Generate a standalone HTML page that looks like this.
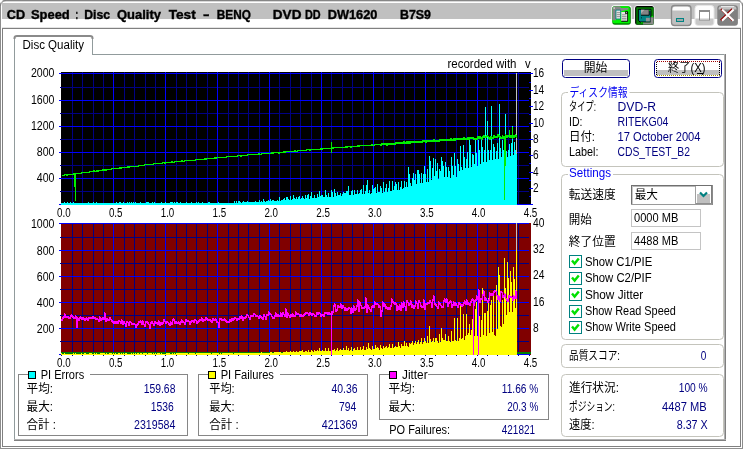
<!DOCTYPE html>
<html lang="ja"><head><meta charset="utf-8"><title>CD Speed : Disc Quality Test</title>
<style>html,body{margin:0;padding:0;background:#fff;overflow:hidden}svg{display:block;will-change:transform}text{font-family:"Liberation Sans","Noto Sans CJK JP","IPAGothic",sans-serif;font-size:12px;white-space:pre}</style></head><body>
<svg width="743" height="449" viewBox="0 0 743 449">
<rect x="0" y="0" width="743" height="449" fill="#fff"/>
<g shape-rendering="crispEdges">
<rect x="0" y="0" width="743" height="1" fill="#868686"/>
<rect x="0" y="1" width="743" height="1" fill="#d8d8d8"/>
<rect x="2" y="3" width="738" height="16" fill="#c0c0c0"/>
<rect x="0" y="0" width="1" height="449" fill="#8c8c8c"/>
<rect x="742" y="0" width="1" height="449" fill="#8c8c8c"/>
<rect x="0" y="448" width="743" height="1" fill="#909090"/>
<rect x="2" y="28" width="739" height="1" fill="#808080"/>
<rect x="2" y="446" width="739" height="1" fill="#808080"/>
<rect x="2" y="28" width="1" height="419" fill="#808080"/>
<rect x="740" y="28" width="1" height="419" fill="#808080"/>
<rect x="2" y="27" width="739" height="1" fill="#e4e4e4"/>
</g>
<path d="M0,5 V0 H5 A5,5 0 0 0 0,5Z" fill="#fff"/><path d="M0.5,6 A5.5,5.5 0 0 1 6,0.5" fill="none" stroke="#808080"/>
<path d="M743,5 V0 H738 A5,5 0 0 1 743,5Z" fill="#fff"/><path d="M742.5,6 A5.5,5.5 0 0 0 737,0.5" fill="none" stroke="#808080"/>
<text y="19.3" font-size="12.4" font-weight="bold" stroke="#000" stroke-width="0.35"><tspan x="6.8" textLength="18.4" lengthAdjust="spacingAndGlyphs">CD</tspan> <tspan x="31" textLength="38.7" lengthAdjust="spacingAndGlyphs">Speed</tspan> <tspan x="75.6" textLength="2.6" lengthAdjust="spacingAndGlyphs">:</tspan> <tspan x="84.2" textLength="25.8" lengthAdjust="spacingAndGlyphs">Disc</tspan> <tspan x="117" textLength="44" lengthAdjust="spacingAndGlyphs">Quality</tspan> <tspan x="168.7" textLength="27" lengthAdjust="spacingAndGlyphs">Test</tspan> <tspan x="203" textLength="6.5" lengthAdjust="spacingAndGlyphs">-</tspan> <tspan x="216.8" textLength="34" lengthAdjust="spacingAndGlyphs">BENQ</tspan> <tspan x="272.8" textLength="28.7" lengthAdjust="spacingAndGlyphs">DVD</tspan> <tspan x="305" textLength="15.7" lengthAdjust="spacingAndGlyphs">DD</tspan> <tspan x="327.7" textLength="49.7" lengthAdjust="spacingAndGlyphs">DW1620</tspan> <tspan x="400" textLength="31" lengthAdjust="spacingAndGlyphs">B7S9</tspan></text>
<g>
<rect x="611.3" y="5.2" width="20.4" height="20.3" rx="3.2" fill="#fdfdfd"/>
<rect x="612.3" y="6.2" width="18.5" height="18.5" rx="2.6" fill="#008400"/>
<path d="M612.3,9 Q612.3,6.2 615,6.2 H627.5 Q629.7,6.2 629.7,8.5 V23.2 H614.5 Q612.3,23.2 612.3,21Z" fill="#00f400"/>
<path d="M612.3,9 Q612.3,6.2 615,6.2 H620 L621,7.9 H628.3 V9.6 L622,11 L617,14 L615.8,20.3 L612.3,20.3Z" fill="#868686"/>
<rect x="613.4" y="7.3" width="1.6" height="1.6" fill="#c8c8c8"/>
<path d="M615.9,10.1 H620.6 V19 H615.9Z" fill="#e4e4e4" stroke="#008484" stroke-width="0.9"/>
<path d="M616.6,12.6h3.6M616.6,14.6h3.6M616.6,16.6h3.6" stroke="#8c8c8c" stroke-width="0.9"/>
<path d="M621.3,12 H625.6 L627.5,13.9 V21 H621.3Z" fill="#e6e6e6"/>
<path d="M625.3,11.8 H627.7 V21.3 H621.3" fill="none" stroke="#101010" stroke-width="1"/>
<path d="M625.2,11.6 h2.6 v2.4 h-2.6z" fill="#101010"/><rect x="626.1" y="12.3" width="0.9" height="0.9" fill="#fff"/>
<path d="M621.9,14.8h4.6M621.9,16.6h4.6M621.9,18.4h4.6M621.9,20.1h4.6" stroke="#8c8c8c" stroke-width="0.9"/>
</g>
<g>
<rect x="634.2" y="5.2" width="20.2" height="20.3" rx="3" fill="#fdfdfd"/>
<rect x="635.1" y="6.1" width="18.6" height="18.7" rx="2" fill="#000"/>
<rect x="636.3" y="7.3" width="17.2" height="17.2" fill="#008400"/>
<path d="M638.3,9.3 H650.9 V22 H640 L638.3,20.4Z" fill="#008484" stroke="#000" stroke-width="1"/>
<path d="M641,9.8 H649 V15 H641Z" fill="#848484"/><path d="M641,13.2 L644.6,9.8 H641Z" fill="#b0b0b0"/>
<path d="M641,15.2 H649.2 V9.8" fill="none" stroke="#000" stroke-width="0.9"/>
<rect x="645.9" y="17.8" width="3.9" height="3.6" fill="#8c9494"/><rect x="641" y="17.2" width="1" height="1.2" fill="#003838"/>
<rect x="651.5" y="15.9" width="1.6" height="1.2" fill="#00f000"/><rect x="649.2" y="9.8" width="1.2" height="1.2" fill="#00c000"/>
<path d="M650.6,17.3 H653.5 V24.4 H643 V22.6 H650.6Z" fill="#8c8c8c"/>
<path d="M641,22 L644.5,23.3 L641.4,23.3Z" fill="#00f000"/>
</g>
<rect x="671.5" y="5.5" width="19.5" height="20" rx="3" fill="#c0c0c0" stroke="#8a8a8a" stroke-width="1.3"/>
<path d="M672.5,10.5 V9 Q672.5,6.7 675,6.7 H687.5 Q690,6.7 690,9 V10.5Z" fill="#fbfbfb"/>
<rect x="676" y="18" width="7" height="3" fill="#a0a8a8" stroke="#008484" stroke-width="1" shape-rendering="crispEdges"/>
<rect x="695" y="5.5" width="19" height="20" rx="3" fill="#fdfdfd" stroke="#e6e6e6"/>
<path d="M695.5,18.5 H713.5 V22.5 Q713.5,25 711,25 H698 Q695.5,25 695.5,22.5Z" fill="#c8c8c8"/>
<rect x="699.5" y="10.5" width="10" height="9.5" fill="#fff" stroke="#8c8c8c"/><rect x="699" y="10" width="11" height="2" fill="#8c8c8c"/><rect x="700" y="18.5" width="9" height="1" fill="#c8c8c8"/>
<rect x="717.3" y="5.3" width="20.6" height="20.4" rx="3" fill="#808080"/>
<path d="M718.6,9.6 V8.6 Q718.6,6.2 721,6.2 H734 Q736.4,6.2 736.4,8.6 V9.6Z" fill="#c0c0c0"/>
<path d="M721,6.6 H734.2" stroke="#f4f4f4" stroke-width="0.9"/>
<path d="M721.6,9.3 L733.2,20.7 M733.0,9.3 L721.4,20.7" stroke="#900000" stroke-width="2.2" transform="translate(-0.55,-0.35)"/>
<path d="M722,9.5 L733.6,20.7 M733.6,9.5 L722,20.7" stroke="#fff" stroke-width="2.1"/>
<g shape-rendering="crispEdges">
<rect x="92" y="54" width="634" height="1" fill="#919b9c"/>
<rect x="14" y="38" width="1" height="403" fill="#919b9c"/>
<rect x="724" y="54" width="1" height="387" fill="#b0b0b0"/>
<rect x="725" y="54" width="1" height="387" fill="#808080"/>
<rect x="14" y="439" width="712" height="1" fill="#b0b0b0"/>
<rect x="14" y="440" width="712" height="1" fill="#808080"/>
<rect x="92" y="38" width="1" height="17" fill="#919b9c"/>
</g>
<path d="M14.5,39 V38 Q14.5,36 17,36 H90 Q92.5,36 92.5,38 V39" fill="none" stroke="#8a8a8a" stroke-width="2"/>
<text x="22.5" y="48.8" textLength="61.5" lengthAdjust="spacingAndGlyphs">Disc Quality</text>
<g shape-rendering="crispEdges">
<rect x="61" y="72" width="470" height="133" fill="#000"/>
<rect x="61" y="87" width="468" height="1" fill="#000084"/>
<rect x="61" y="113" width="468" height="1" fill="#000084"/>
<rect x="61" y="139" width="468" height="1" fill="#000084"/>
<rect x="61" y="165" width="468" height="1" fill="#000084"/>
<rect x="61" y="191" width="468" height="1" fill="#000084"/>
<rect x="72" y="72" width="1" height="132" fill="#000084"/>
<rect x="82" y="72" width="1" height="132" fill="#000084"/>
<rect x="93" y="72" width="1" height="132" fill="#000084"/>
<rect x="103" y="72" width="1" height="132" fill="#000084"/>
<rect x="124" y="72" width="1" height="132" fill="#000084"/>
<rect x="134" y="72" width="1" height="132" fill="#000084"/>
<rect x="145" y="72" width="1" height="132" fill="#000084"/>
<rect x="155" y="72" width="1" height="132" fill="#000084"/>
<rect x="176" y="72" width="1" height="132" fill="#000084"/>
<rect x="186" y="72" width="1" height="132" fill="#000084"/>
<rect x="196" y="72" width="1" height="132" fill="#000084"/>
<rect x="207" y="72" width="1" height="132" fill="#000084"/>
<rect x="228" y="72" width="1" height="132" fill="#000084"/>
<rect x="238" y="72" width="1" height="132" fill="#000084"/>
<rect x="248" y="72" width="1" height="132" fill="#000084"/>
<rect x="259" y="72" width="1" height="132" fill="#000084"/>
<rect x="279" y="72" width="1" height="132" fill="#000084"/>
<rect x="290" y="72" width="1" height="132" fill="#000084"/>
<rect x="300" y="72" width="1" height="132" fill="#000084"/>
<rect x="311" y="72" width="1" height="132" fill="#000084"/>
<rect x="331" y="72" width="1" height="132" fill="#000084"/>
<rect x="342" y="72" width="1" height="132" fill="#000084"/>
<rect x="352" y="72" width="1" height="132" fill="#000084"/>
<rect x="363" y="72" width="1" height="132" fill="#000084"/>
<rect x="383" y="72" width="1" height="132" fill="#000084"/>
<rect x="394" y="72" width="1" height="132" fill="#000084"/>
<rect x="404" y="72" width="1" height="132" fill="#000084"/>
<rect x="414" y="72" width="1" height="132" fill="#000084"/>
<rect x="435" y="72" width="1" height="132" fill="#000084"/>
<rect x="446" y="72" width="1" height="132" fill="#000084"/>
<rect x="456" y="72" width="1" height="132" fill="#000084"/>
<rect x="466" y="72" width="1" height="132" fill="#000084"/>
<rect x="487" y="72" width="1" height="132" fill="#000084"/>
<rect x="497" y="72" width="1" height="132" fill="#000084"/>
<rect x="508" y="72" width="1" height="132" fill="#000084"/>
<rect x="518" y="72" width="1" height="132" fill="#000084"/>
<rect x="61" y="73" width="468" height="1" fill="#0000ff"/>
<rect x="61" y="100" width="468" height="1" fill="#0000ff"/>
<rect x="61" y="126" width="468" height="1" fill="#0000ff"/>
<rect x="61" y="152" width="468" height="1" fill="#0000ff"/>
<rect x="61" y="178" width="468" height="1" fill="#0000ff"/>
<rect x="61" y="204" width="468" height="1" fill="#0000ff"/>
<rect x="113" y="72" width="1" height="132" fill="#0000ff"/>
<rect x="165" y="72" width="1" height="132" fill="#0000ff"/>
<rect x="217" y="72" width="1" height="132" fill="#0000ff"/>
<rect x="269" y="72" width="1" height="132" fill="#0000ff"/>
<rect x="321" y="72" width="1" height="132" fill="#0000ff"/>
<rect x="373" y="72" width="1" height="132" fill="#0000ff"/>
<rect x="425" y="72" width="1" height="132" fill="#0000ff"/>
<rect x="477" y="72" width="1" height="132" fill="#0000ff"/>
</g>
<g shape-rendering="crispEdges">
<rect x="516" y="73" width="1" height="131" fill="#c0c0c0"/>
<path d="M61,205V203h3V202h1V203h2V202h1V203h2V202h1V203h2V202h1V203h14V202h1V203h4V202h1V203h2V202h1V203h19V202h1V203h2V202h2V203h2V202h1V203h3V202h1V203h1V202h1V203h1V202h1V203h1V202h1V203h1V202h1V203h4V202h1V203h5V202h3V203h3V202h1V203h1V202h1V203h6V202h1V203h3V202h1V203h4V202h3V203h1V202h1V203h1V202h2V203h2V202h1V203h5V202h1V203h4V202h1V203h4V202h1V203h1V202h1V203h3V202h1V203h5V202h2V203h8V202h1V203h15V201h1V203h1V201h1V203h1V201h2V202h1V203h1V202h1V201h1V202h3V201h1V202h7V201h1V202h3V200h1V202h1V201h1V202h1V199h1V201h1V202h1V201h2V200h1V201h1V199h1V201h1V200h2V201h3V200h1V201h1V197h1V201h1V200h2V199h1V198h1V200h1V197h2V199h1V200h1V196h1V200h1V199h1V195h1V198h1V199h1V197h1V199h1V197h1V196h1V199h1V198h1V196h1V198h1V199h1V195h1V198h1V195h1V194h1V199h1V196h1V192h1V198h2V195h1V198h2V194h1V197h1V191h1V196h1V195h2V197h2V190h1V195h1V197h1V193h1V197h2V190h1V192h1V197h1V189h1V193h1V196h1V192h1V195h2V193h1V196h1V194h1V192h1V193h2V191h2V186h1V195h2V191h1V190h1V195h1V190h1V194h2V190h1V194h1V193h1V190h1V189h1V194h1V185h1V194h1V191h1V185h1V180h1V193h1V190h1V194h1V193h1V185h1V189h1V188h1V187h1V193h1V184h1V192h2V186h1V188h1V193h1V182h1V192h1V188h1V184h1V192h1V188h1V181h1V191h2V181h1V190h1V186h1V182h1V184h1V190h1V182h1V190h1V187h1V181h1V189h1V188h1V181h1V187h1V182h1V187h1V167h1V174h1V183h1V186h1V178h1V173h1V180h1V174h1V184h1V170h2V174h1V183h1V173h1V183h1V174h1V166h1V174h1V182h1V169h1V182h1V156h1V161h1V180h1V168h1V158h1V176h1V159h1V171h1V163h1V179h1V169h1V171h1V157h1V161h1V166h1V177h1V162h1V167h1V177h1V167h1V171h1V178h1V157h1V166h1V175h1V153h1V166h1V177h1V159h1V164h1V171h1V146h1V167h1V170h1V145h1V157h1V168h1V159h1V152h1V168h1V140h1V145h1V167h1V154h1V155h1V164h1V140h1V153h1V166h1V140h1V150h1V164h1V139h1V147h1V162h1V150h1V107h1V162h1V121h1V150h1V160h1V150h1V106h1V160h1V144h1V147h1V159h1V151h1V143h1V159h1V104h1V148h1V157h1V140h1V150h1V158h1V114h1V151h1V157h1V150h1V144h1V156h1V143h1V126h1V155h1V142h1V150h1V154h1V205Z" fill="#00ffff"/>
</g>
<path d="M62,175v1h1v-1zM63,175v1h1v-1zM64,174v2h1v-2zM65,174v1h1v-1zM66,174v2h1v-2zM67,174v2h1v-2zM68,174v1h1v-1zM69,174v1h1v-1zM70,174v1h1v-1zM71,174v1h1v-1zM72,174v1h1v-1zM73,173v2h1v-2zM74,173v1h1v-1zM75,173v1h1v-1zM76,173v1h1v-1zM77,173v1h1v-1zM78,173v1h1v-1zM79,173v1h1v-1zM80,173v1h1v-1zM81,172v2h1v-2zM82,172v1h1v-1zM83,172v1h1v-1zM84,172v1h1v-1zM85,172v1h1v-1zM86,172v1h1v-1zM87,172v1h1v-1zM88,172v1h1v-1zM89,171v2h1v-2zM90,171v1h1v-1zM91,171v1h1v-1zM92,171v1h1v-1zM93,170v2h1v-2zM94,170v2h1v-2zM95,171v1h1v-1zM96,170v2h1v-2zM97,170v2h1v-2zM98,170v2h1v-2zM99,170v1h1v-1zM100,170v1h1v-1zM101,170v1h1v-1zM102,169v2h1v-2zM103,169v2h1v-2zM104,169v2h1v-2zM105,169v2h1v-2zM106,169v2h1v-2zM107,169v1h1v-1zM108,169v1h1v-1zM109,169v1h1v-1zM110,169v1h1v-1zM111,168v2h1v-2zM112,168v1h1v-1zM113,168v1h1v-1zM114,168v1h1v-1zM115,168v1h1v-1zM116,168v1h1v-1zM117,168v1h1v-1zM118,168v1h1v-1zM119,167v2h1v-2zM120,167v2h1v-2zM121,167v2h1v-2zM122,167v1h1v-1zM123,167v1h1v-1zM124,167v1h1v-1zM125,167v1h1v-1zM126,167v1h1v-1zM127,166v2h1v-2zM128,166v2h1v-2zM129,166v2h1v-2zM130,166v1h1v-1zM131,166v1h1v-1zM132,166v1h1v-1zM133,166v1h1v-1zM134,166v1h1v-1zM135,166v1h1v-1zM136,166v1h1v-1zM137,166v1h1v-1zM138,165v2h1v-2zM139,165v1h1v-1zM140,165v1h1v-1zM141,165v1h1v-1zM142,165v1h1v-1zM143,165v1h1v-1zM144,164v2h1v-2zM145,164v1h1v-1zM146,164v1h1v-1zM147,164v1h1v-1zM148,164v1h1v-1zM149,164v1h1v-1zM150,164v1h1v-1zM151,164v1h1v-1zM152,164v1h1v-1zM153,163v2h1v-2zM154,163v1h1v-1zM155,163v1h1v-1zM156,163v1h1v-1zM157,163v1h1v-1zM158,163v1h1v-1zM159,163v1h1v-1zM160,163v1h1v-1zM161,163v1h1v-1zM162,162v2h1v-2zM163,162v1h1v-1zM164,162v2h1v-2zM165,162v2h1v-2zM166,162v1h1v-1zM167,162v1h1v-1zM168,162v1h1v-1zM169,162v1h1v-1zM170,162v1h1v-1zM171,161v2h1v-2zM172,161v2h1v-2zM173,162v1h1v-1zM174,161v2h1v-2zM175,161v1h1v-1zM176,161v1h1v-1zM177,161v1h1v-1zM178,161v1h1v-1zM179,161v1h1v-1zM180,161v1h1v-1zM181,160v2h1v-2zM182,160v2h1v-2zM183,161v1h1v-1zM184,160v2h1v-2zM185,160v1h1v-1zM186,160v1h1v-1zM187,160v1h1v-1zM188,160v1h1v-1zM189,160v1h1v-1zM190,160v1h1v-1zM191,160v1h1v-1zM192,160v1h1v-1zM193,160v1h1v-1zM194,160v1h1v-1zM195,159v2h1v-2zM196,159v1h1v-1zM197,159v1h1v-1zM198,159v1h1v-1zM199,159v1h1v-1zM200,159v1h1v-1zM201,159v1h1v-1zM202,159v1h1v-1zM203,159v1h1v-1zM204,158v2h1v-2zM205,158v2h1v-2zM206,158v2h1v-2zM207,158v1h1v-1zM208,158v1h1v-1zM209,158v1h1v-1zM210,158v1h1v-1zM211,158v1h1v-1zM212,158v1h1v-1zM213,158v1h1v-1zM214,157v2h1v-2zM215,157v2h1v-2zM216,157v2h1v-2zM217,157v1h1v-1zM218,157v1h1v-1zM219,157v1h1v-1zM220,157v1h1v-1zM221,157v1h1v-1zM222,157v1h1v-1zM223,157v1h1v-1zM224,157v1h1v-1zM225,157v1h1v-1zM226,156v2h1v-2zM227,156v1h1v-1zM228,156v1h1v-1zM229,156v1h1v-1zM230,156v1h1v-1zM231,156v1h1v-1zM232,156v1h1v-1zM233,156v1h1v-1zM234,156v1h1v-1zM235,156v1h1v-1zM236,156v1h1v-1zM237,155v2h1v-2zM238,155v1h1v-1zM239,155v1h1v-1zM240,155v2h1v-2zM241,155v2h1v-2zM242,155v1h1v-1zM243,155v1h1v-1zM244,155v1h1v-1zM245,155v1h1v-1zM246,155v1h1v-1zM247,154v2h1v-2zM248,154v1h1v-1zM249,154v1h1v-1zM250,154v1h1v-1zM251,154v1h1v-1zM252,154v1h1v-1zM253,154v1h1v-1zM254,154v1h1v-1zM255,154v1h1v-1zM256,154v1h1v-1zM257,154v1h1v-1zM258,153v2h1v-2zM259,153v2h1v-2zM260,154v1h1v-1zM261,153v2h1v-2zM262,153v1h1v-1zM263,153v1h1v-1zM264,153v1h1v-1zM265,153v1h1v-1zM266,153v1h1v-1zM267,153v1h1v-1zM268,153v1h1v-1zM269,153v1h1v-1zM270,153v1h1v-1zM271,152v2h1v-2zM272,152v2h1v-2zM273,152v2h1v-2zM274,152v1h1v-1zM275,152v1h1v-1zM276,152v1h1v-1zM277,152v1h1v-1zM278,152v2h1v-2zM279,152v2h1v-2zM280,152v1h1v-1zM281,152v1h1v-1zM282,152v1h1v-1zM283,151v2h1v-2zM284,151v2h1v-2zM285,151v2h1v-2zM286,151v1h1v-1zM287,151v1h1v-1zM288,151v1h1v-1zM289,151v1h1v-1zM290,151v1h1v-1zM291,151v1h1v-1zM292,151v1h1v-1zM293,151v1h1v-1zM294,150v2h1v-2zM295,150v2h1v-2zM296,151v1h1v-1zM297,150v2h1v-2zM298,150v1h1v-1zM299,150v1h1v-1zM300,150v1h1v-1zM301,150v1h1v-1zM302,150v1h1v-1zM303,150v1h1v-1zM304,150v1h1v-1zM305,150v1h1v-1zM306,149v2h1v-2zM307,149v1h1v-1zM308,149v1h1v-1zM309,149v2h1v-2zM310,149v2h1v-2zM311,149v1h1v-1zM312,149v1h1v-1zM313,149v1h1v-1zM314,149v1h1v-1zM315,149v1h1v-1zM316,149v1h1v-1zM317,149v1h1v-1zM318,149v1h1v-1zM319,149v1h1v-1zM320,148v2h1v-2zM321,148v2h1v-2zM322,148v2h1v-2zM323,148v1h1v-1zM324,148v1h1v-1zM325,148v1h1v-1zM326,148v1h1v-1zM327,148v1h1v-1zM328,148v1h1v-1zM329,148v1h1v-1zM330,148v1h1v-1zM331,147v2h1v-2zM332,147v2h1v-2zM333,147v2h1v-2zM334,147v1h1v-1zM335,147v1h1v-1zM336,147v1h1v-1zM337,147v1h1v-1zM338,147v1h1v-1zM339,147v1h1v-1zM340,147v1h1v-1zM341,147v1h1v-1zM342,147v1h1v-1zM343,147v1h1v-1zM344,147v1h1v-1zM345,146v2h1v-2zM346,146v2h1v-2zM347,146v2h1v-2zM348,146v1h1v-1zM349,146v1h1v-1zM350,146v2h1v-2zM351,146v2h1v-2zM352,146v1h1v-1zM353,146v1h1v-1zM354,146v1h1v-1zM355,146v1h1v-1zM356,146v1h1v-1zM357,145v2h1v-2zM358,145v2h1v-2zM359,145v2h1v-2zM360,145v1h1v-1zM361,145v1h1v-1zM362,145v1h1v-1zM363,145v1h1v-1zM364,145v1h1v-1zM365,145v1h1v-1zM366,145v1h1v-1zM367,145v1h1v-1zM368,145v1h1v-1zM369,145v1h1v-1zM370,145v1h1v-1zM371,144v2h1v-2zM372,144v2h1v-2zM373,145v1h1v-1zM374,144v2h1v-2zM375,144v1h1v-1zM376,144v1h1v-1zM377,144v1h1v-1zM378,144v1h1v-1zM379,144v1h1v-1zM380,144v1h1v-1z" fill="#00f000" shape-rendering="crispEdges"/>
<path d="M380,144v2h1v-2zM381,143v3h1v-3zM382,143v2h1v-2zM383,143v2h1v-2zM384,143v2h1v-2zM385,143v2h1v-2zM386,143v3h1v-3zM387,143v3h1v-3zM388,143v2h1v-2zM389,143v2h1v-2zM390,143v2h1v-2zM391,143v2h1v-2zM392,143v2h1v-2zM393,143v2h1v-2zM394,143v2h1v-2zM395,142v3h1v-3zM396,142v2h1v-2zM397,142v2h1v-2zM398,142v2h1v-2zM399,142v2h1v-2zM400,142v2h1v-2zM401,142v2h1v-2zM402,142v2h1v-2zM403,141v3h1v-3zM404,141v3h1v-3zM405,142v2h1v-2zM406,141v3h1v-3zM407,141v3h1v-3zM408,141v3h1v-3zM409,141v3h1v-3zM410,141v3h1v-3zM411,141v2h1v-2zM412,141v2h1v-2zM413,141v2h1v-2zM414,141v2h1v-2zM415,141v2h1v-2zM416,141v2h1v-2zM417,141v2h1v-2zM418,141v2h1v-2zM419,141v2h1v-2zM420,141v2h1v-2zM421,141v2h1v-2zM422,140v3h1v-3zM423,140v2h1v-2zM424,140v2h1v-2zM425,140v3h1v-3zM426,140v3h1v-3zM427,140v2h1v-2zM428,140v2h1v-2zM429,140v2h1v-2zM430,140v2h1v-2zM431,140v2h1v-2zM432,140v2h1v-2zM433,139v3h1v-3zM434,139v3h1v-3zM435,140v2h1v-2zM436,140v2h1v-2zM437,140v2h1v-2zM438,140v2h1v-2zM439,139v3h1v-3zM440,139v2h1v-2zM441,139v2h1v-2zM442,139v2h1v-2zM443,139v2h1v-2zM444,139v2h1v-2zM445,139v2h1v-2zM446,139v2h1v-2zM447,139v2h1v-2zM448,139v2h1v-2zM449,139v2h1v-2zM450,138v3h1v-3zM451,138v3h1v-3zM452,139v2h1v-2zM453,138v3h1v-3zM454,138v3h1v-3zM455,138v3h1v-3zM456,138v2h1v-2zM457,138v2h1v-2zM458,138v2h1v-2zM459,138v2h1v-2zM460,138v2h1v-2zM461,138v2h1v-2zM462,138v2h1v-2zM463,137v3h1v-3zM464,137v3h1v-3zM465,138v2h1v-2zM466,138v2h1v-2zM467,137v3h1v-3zM468,137v3h1v-3zM469,137v3h1v-3zM470,137v2h1v-2zM471,137v2h1v-2zM472,137v2h1v-2zM473,137v3h1v-3zM474,138v2h1v-2zM475,138v2h1v-2zM476,138v2h1v-2zM477,136v4h1v-4zM478,136v3h1v-3zM479,136v3h1v-3zM480,136v3h1v-3zM481,137v3h1v-3zM482,136v4h1v-4zM483,135v3h1v-3zM484,135v3h1v-3zM485,136v2h1v-2zM486,135v3h1v-3zM487,135v2h1v-2zM488,136v3h1v-3zM489,137v3h1v-3zM490,136v4h1v-4zM491,136v3h1v-3zM492,137v2h1v-2zM493,135v4h1v-4zM494,135v3h1v-3zM495,136v2h1v-2zM496,136v2h1v-2zM497,134v4h1v-4zM498,134v3h1v-3zM499,135v3h1v-3zM500,136v3h1v-3zM501,137v2h1v-2zM502,135v4h1v-4zM503,136v3h1v-3zM504,136v3h1v-3zM505,134v4h1v-4zM506,135v3h1v-3zM507,135v3h1v-3zM508,135v2h1v-2zM509,135v2h1v-2zM510,135v3h1v-3zM511,135v3h1v-3zM512,134v3h1v-3zM513,135v3h1v-3zM514,135v3h1v-3zM515,134v3h1v-3zM516,135v3h1v-3z" fill="#00f000" shape-rendering="crispEdges"/>
<g shape-rendering="crispEdges">
<rect x="74" y="174" width="2" height="13" fill="#00f000"/>
<rect x="75" y="187" width="1" height="14" fill="#00f000"/>
<rect x="331" y="142" width="1" height="11" fill="#00f000"/>
<rect x="504" y="136" width="2" height="30" fill="#00f000"/>
<rect x="504" y="166" width="1" height="34" fill="#00f000"/>
<rect x="512" y="127" width="1" height="12" fill="#00f000"/>
<rect x="509" y="130" width="1" height="8" fill="#00f000"/>
</g>
<g shape-rendering="crispEdges">
<rect x="59" y="73" width="2" height="1" fill="#0000ff"/>
<rect x="60" y="87" width="1" height="1" fill="#000084"/>
<rect x="59" y="100" width="2" height="1" fill="#0000ff"/>
<rect x="60" y="113" width="1" height="1" fill="#000084"/>
<rect x="59" y="126" width="2" height="1" fill="#0000ff"/>
<rect x="60" y="139" width="1" height="1" fill="#000084"/>
<rect x="59" y="152" width="2" height="1" fill="#0000ff"/>
<rect x="60" y="165" width="1" height="1" fill="#000084"/>
<rect x="59" y="178" width="2" height="1" fill="#0000ff"/>
<rect x="60" y="191" width="1" height="1" fill="#000084"/>
<rect x="59" y="204" width="2" height="1" fill="#0000ff"/>
<rect x="529" y="73" width="4" height="1" fill="#0000ff"/>
<rect x="529" y="82" width="2" height="1" fill="#0000ff"/>
<rect x="529" y="90" width="4" height="1" fill="#0000ff"/>
<rect x="529" y="98" width="2" height="1" fill="#0000ff"/>
<rect x="529" y="106" width="4" height="1" fill="#0000ff"/>
<rect x="529" y="114" width="2" height="1" fill="#0000ff"/>
<rect x="529" y="123" width="4" height="1" fill="#0000ff"/>
<rect x="529" y="131" width="2" height="1" fill="#0000ff"/>
<rect x="529" y="139" width="4" height="1" fill="#0000ff"/>
<rect x="529" y="147" width="2" height="1" fill="#0000ff"/>
<rect x="529" y="155" width="4" height="1" fill="#0000ff"/>
<rect x="529" y="163" width="2" height="1" fill="#0000ff"/>
<rect x="529" y="172" width="4" height="1" fill="#0000ff"/>
<rect x="529" y="180" width="2" height="1" fill="#0000ff"/>
<rect x="529" y="188" width="4" height="1" fill="#0000ff"/>
<rect x="529" y="196" width="2" height="1" fill="#0000ff"/>
<rect x="529" y="204" width="4" height="1" fill="#0000ff"/>
</g>
<g shape-rendering="crispEdges">
<rect x="61" y="223" width="470" height="132" fill="#800000"/>
<rect x="61" y="237" width="468" height="1" fill="#000084"/>
<rect x="61" y="263" width="468" height="1" fill="#000084"/>
<rect x="61" y="289" width="468" height="1" fill="#000084"/>
<rect x="61" y="315" width="468" height="1" fill="#000084"/>
<rect x="61" y="341" width="468" height="1" fill="#000084"/>
<rect x="72" y="223" width="1" height="131" fill="#000084"/>
<rect x="82" y="223" width="1" height="131" fill="#000084"/>
<rect x="93" y="223" width="1" height="131" fill="#000084"/>
<rect x="103" y="223" width="1" height="131" fill="#000084"/>
<rect x="124" y="223" width="1" height="131" fill="#000084"/>
<rect x="134" y="223" width="1" height="131" fill="#000084"/>
<rect x="145" y="223" width="1" height="131" fill="#000084"/>
<rect x="155" y="223" width="1" height="131" fill="#000084"/>
<rect x="176" y="223" width="1" height="131" fill="#000084"/>
<rect x="186" y="223" width="1" height="131" fill="#000084"/>
<rect x="196" y="223" width="1" height="131" fill="#000084"/>
<rect x="207" y="223" width="1" height="131" fill="#000084"/>
<rect x="228" y="223" width="1" height="131" fill="#000084"/>
<rect x="238" y="223" width="1" height="131" fill="#000084"/>
<rect x="248" y="223" width="1" height="131" fill="#000084"/>
<rect x="259" y="223" width="1" height="131" fill="#000084"/>
<rect x="279" y="223" width="1" height="131" fill="#000084"/>
<rect x="290" y="223" width="1" height="131" fill="#000084"/>
<rect x="300" y="223" width="1" height="131" fill="#000084"/>
<rect x="311" y="223" width="1" height="131" fill="#000084"/>
<rect x="331" y="223" width="1" height="131" fill="#000084"/>
<rect x="342" y="223" width="1" height="131" fill="#000084"/>
<rect x="352" y="223" width="1" height="131" fill="#000084"/>
<rect x="363" y="223" width="1" height="131" fill="#000084"/>
<rect x="383" y="223" width="1" height="131" fill="#000084"/>
<rect x="394" y="223" width="1" height="131" fill="#000084"/>
<rect x="404" y="223" width="1" height="131" fill="#000084"/>
<rect x="414" y="223" width="1" height="131" fill="#000084"/>
<rect x="435" y="223" width="1" height="131" fill="#000084"/>
<rect x="446" y="223" width="1" height="131" fill="#000084"/>
<rect x="456" y="223" width="1" height="131" fill="#000084"/>
<rect x="466" y="223" width="1" height="131" fill="#000084"/>
<rect x="487" y="223" width="1" height="131" fill="#000084"/>
<rect x="497" y="223" width="1" height="131" fill="#000084"/>
<rect x="508" y="223" width="1" height="131" fill="#000084"/>
<rect x="518" y="223" width="1" height="131" fill="#000084"/>
<rect x="61" y="223" width="468" height="1" fill="#0000ff"/>
<rect x="61" y="250" width="468" height="1" fill="#0000ff"/>
<rect x="61" y="276" width="468" height="1" fill="#0000ff"/>
<rect x="61" y="302" width="468" height="1" fill="#0000ff"/>
<rect x="61" y="328" width="468" height="1" fill="#0000ff"/>
<rect x="61" y="354" width="468" height="1" fill="#0000ff"/>
<rect x="113" y="223" width="1" height="131" fill="#0000ff"/>
<rect x="165" y="223" width="1" height="131" fill="#0000ff"/>
<rect x="217" y="223" width="1" height="131" fill="#0000ff"/>
<rect x="269" y="223" width="1" height="131" fill="#0000ff"/>
<rect x="321" y="223" width="1" height="131" fill="#0000ff"/>
<rect x="373" y="223" width="1" height="131" fill="#0000ff"/>
<rect x="425" y="223" width="1" height="131" fill="#0000ff"/>
<rect x="477" y="223" width="1" height="131" fill="#0000ff"/>
</g>
<g shape-rendering="crispEdges">
<rect x="61" y="352" width="470" height="2" fill="#008000"/>
<rect x="59" y="354" width="471" height="1" fill="#0000ff"/>
<rect x="516" y="223" width="1" height="129" fill="#c0c0c0"/>
<path d="M61,355V353h1V354h2V353h1V354h8V353h1V354h1V353h1V354h5V353h1V354h2V353h2V354h3V353h3V354h2V353h1V354h1V353h1V354h3V353h5V354h1V353h1V354h2V353h3V354h1V353h1V354h1V353h1V354h2V353h2V354h1V353h1V354h1V353h1V354h1V353h2V354h4V353h1V354h1V353h1V354h1V353h1V354h1V353h2V354h1V353h2V354h1V353h4V354h1V353h4V354h1V353h1V354h1V353h1V354h1V353h3V354h1V353h1V354h4V353h4V354h2V353h1V354h1V353h1V354h1V353h12V354h1V353h6V354h1V353h15V354h1V353h7V354h1V353h1V354h1V353h11V354h1V353h27V352h1V353h8V352h2V353h2V352h7V353h2V352h3V351h1V352h3V351h1V352h2V351h1V352h2V351h1V352h2V351h3V350h1V352h2V351h2V352h1V350h1V352h2V350h1V351h1V352h1V350h1V351h2V350h1V351h1V348h1V351h2V350h1V351h2V348h1V351h2V348h1V351h2V349h1V350h2V349h1V351h1V350h1V348h1V351h1V350h1V349h1V350h2V348h1V350h2V346h1V350h1V348h1V351h1V350h1V347h1V351h1V349h1V348h1V350h2V347h1V350h2V347h1V350h1V349h1V346h1V350h2V347h1V349h1V343h1V348h1V349h1V350h1V346h1V349h2V345h1V348h1V347h1V348h1V350h1V345h1V348h1V349h1V346h1V348h1V347h1V346h1V348h1V347h1V344h1V348h2V344h1V348h1V347h1V346h1V347h2V342h1V346h1V348h1V344h1V346h2V341h1V346h1V343h1V346h1V347h1V343h1V344h1V343h1V341h1V345h1V343h1V341h1V344h1V342h1V340h1V344h1V342h1V338h1V344h1V342h1V338h1V341h1V343h1V336h1V343h1V326h1V339h1V342h1V341h1V338h1V342h1V338h2V341h1V343h1V334h1V342h1V328h1V338h1V340h2V334h1V341h2V336h1V341h1V342h1V331h1V341h2V318h1V340h1V341h1V318h1V341h1V338h1V305h1V339h1V338h1V314h1V340h1V336h1V314h1V335h1V333h1V324h1V335h1V330h1V319h1V335h1V336h1V309h1V302h1V336h1V310h1V316h1V337h1V320h1V288h1V335h1V313h2V336h1V311h1V298h1V333h1V305h1V300h1V332h1V291h1V335h1V336h1V285h1V329h1V267h1V275h1V326h1V327h1V300h1V324h1V258h1V288h1V315h1V262h1V278h1V312h1V271h1V282h1V312h1V267h1V279h1V308h1V250h1V355Z" fill="#ffff00"/>
</g>
<path d="M61,319v2h1v-2zM62,317v4h1v-4zM63,316v3h1v-3zM64,313v5h1v-5zM65,314v4h1v-4zM66,316v2h1v-2zM67,316v2h1v-2zM68,316v3h1v-3zM69,317v2h1v-2zM70,315v4h1v-4zM71,314v3h1v-3zM72,315v3h1v-3zM73,316v3h1v-3zM74,317v2h1v-2zM75,315v4h1v-4zM76,316v12h1v-12zM77,317v11h1v-11zM78,318v3h1v-3zM79,317v4h1v-4zM80,316v3h1v-3zM81,317v3h1v-3zM82,317v3h1v-3zM83,317v3h1v-3zM84,318v3h1v-3zM85,318v3h1v-3zM86,317v3h1v-3zM87,318v3h1v-3zM88,317v4h1v-4zM89,317v2h1v-2zM90,317v2h1v-2zM91,317v2h1v-2zM92,316v3h1v-3zM93,316v3h1v-3zM94,317v2h1v-2zM95,317v3h1v-3zM96,318v2h1v-2zM97,318v2h1v-2zM98,319v3h1v-3zM99,316v6h1v-6zM100,317v4h1v-4zM101,318v3h1v-3zM102,317v3h1v-3zM103,317v3h1v-3zM104,312v8h1v-8zM105,313v9h1v-9zM106,318v4h1v-4zM107,318v3h1v-3zM108,319v2h1v-2zM109,317v4h1v-4zM110,317v3h1v-3zM111,319v3h1v-3zM112,320v3h1v-3zM113,321v3h1v-3zM114,321v3h1v-3zM115,321v3h1v-3zM116,321v3h1v-3zM117,321v3h1v-3zM118,320v4h1v-4zM119,320v2h1v-2zM120,321v3h1v-3zM121,319v5h1v-5zM122,320v5h1v-5zM123,321v4h1v-4zM124,321v3h1v-3zM125,323v4h1v-4zM126,321v6h1v-6zM127,321v2h1v-2zM128,322v4h1v-4zM129,321v5h1v-5zM130,321v2h1v-2zM131,322v3h1v-3zM132,323v2h1v-2zM133,323v2h1v-2zM134,323v2h1v-2zM135,324v4h1v-4zM136,324v4h1v-4zM137,323v3h1v-3zM138,321v4h1v-4zM139,321v2h1v-2zM140,320v3h1v-3zM141,321v4h1v-4zM142,320v5h1v-5zM143,321v4h1v-4zM144,324v3h1v-3zM145,321v6h1v-6zM146,321v2h1v-2zM147,321v3h1v-3zM148,322v3h1v-3zM149,324v5h1v-5zM150,322v7h1v-7zM151,321v3h1v-3zM152,321v3h1v-3zM153,323v3h1v-3zM154,321v5h1v-5zM155,321v3h1v-3zM156,322v2h1v-2zM157,322v3h1v-3zM158,320v5h1v-5zM159,321v5h1v-5zM160,322v4h1v-4zM161,322v3h1v-3zM162,322v3h1v-3zM163,319v5h1v-5zM164,319v3h1v-3zM165,321v3h1v-3zM166,321v3h1v-3zM167,321v2h1v-2zM168,322v3h1v-3zM169,323v3h1v-3zM170,321v5h1v-5zM171,322v3h1v-3zM172,319v6h1v-6zM173,318v3h1v-3zM174,319v5h1v-5zM175,321v3h1v-3zM176,321v3h1v-3zM177,322v2h1v-2zM178,321v3h1v-3zM179,322v3h1v-3zM180,321v4h1v-4zM181,319v4h1v-4zM182,320v3h1v-3zM183,321v2h1v-2zM184,322v3h1v-3zM185,319v6h1v-6zM186,319v3h1v-3zM187,320v2h1v-2zM188,320v2h1v-2zM189,321v4h1v-4zM190,321v4h1v-4zM191,320v3h1v-3zM192,320v2h1v-2zM193,320v3h1v-3zM194,319v4h1v-4zM195,319v2h1v-2zM196,320v4h1v-4zM197,321v3h1v-3zM198,320v3h1v-3zM199,319v3h1v-3zM200,319v2h1v-2zM201,317v4h1v-4zM202,318v4h1v-4zM203,319v3h1v-3zM204,319v2h1v-2zM205,317v4h1v-4zM206,317v3h1v-3zM207,318v3h1v-3zM208,319v2h1v-2zM209,319v2h1v-2zM210,319v3h1v-3zM211,320v3h1v-3zM212,318v5h1v-5zM213,318v3h1v-3zM214,319v2h1v-2zM215,318v3h1v-3zM216,319v4h1v-4zM217,321v2h1v-2zM218,322v6h1v-6zM219,318v10h1v-10zM220,318v2h1v-2zM221,318v3h1v-3zM222,319v2h1v-2zM223,319v2h1v-2zM224,318v3h1v-3zM225,319v3h1v-3zM226,320v3h1v-3zM227,321v2h1v-2zM228,321v2h1v-2zM229,319v4h1v-4zM230,319v3h1v-3zM231,318v4h1v-4zM232,318v3h1v-3zM233,318v3h1v-3zM234,317v3h1v-3zM235,317v2h1v-2zM236,318v3h1v-3zM237,318v3h1v-3zM238,318v2h1v-2zM239,316v4h1v-4zM240,316v3h1v-3zM241,315v4h1v-4zM242,316v5h1v-5zM243,317v4h1v-4zM244,317v2h1v-2zM245,316v3h1v-3zM246,314v4h1v-4zM247,314v2h1v-2zM248,315v3h1v-3zM249,317v3h1v-3zM250,315v5h1v-5zM251,315v2h1v-2zM252,315v2h1v-2zM253,313v4h1v-4zM254,313v2h1v-2zM255,314v3h1v-3zM256,315v2h1v-2zM257,315v2h1v-2zM258,316v3h1v-3zM259,315v4h1v-4zM260,315v3h1v-3zM261,316v3h1v-3zM262,317v3h1v-3zM263,314v6h1v-6zM264,314v3h1v-3zM265,316v4h1v-4zM266,314v6h1v-6zM267,314v2h1v-2zM268,311v5h1v-5zM269,312v3h1v-3zM270,313v2h1v-2zM271,314v3h1v-3zM272,316v3h1v-3zM273,317v2h1v-2zM274,315v4h1v-4zM275,312v5h1v-5zM276,313v4h1v-4zM277,314v3h1v-3zM278,314v3h1v-3zM279,315v2h1v-2zM280,312v5h1v-5zM281,313v4h1v-4zM282,312v5h1v-5zM283,312v3h1v-3zM284,314v3h1v-3zM285,308v9h1v-9zM286,309v9h1v-9zM287,312v6h1v-6zM288,313v3h1v-3zM289,315v3h1v-3zM290,314v4h1v-4zM291,314v3h1v-3zM292,313v4h1v-4zM293,314v3h1v-3zM294,315v2h1v-2zM295,311v6h1v-6zM296,312v3h1v-3zM297,313v2h1v-2zM298,313v2h1v-2zM299,314v3h1v-3zM300,314v3h1v-3zM301,314v3h1v-3zM302,315v2h1v-2zM303,314v3h1v-3zM304,313v3h1v-3zM305,312v3h1v-3zM306,312v2h1v-2zM307,312v2h1v-2zM308,313v3h1v-3zM309,312v4h1v-4zM310,312v3h1v-3zM311,313v3h1v-3zM312,313v3h1v-3zM313,313v2h1v-2zM314,314v3h1v-3zM315,315v2h1v-2zM316,312v5h1v-5zM317,312v3h1v-3zM318,312v3h1v-3zM319,312v2h1v-2zM320,313v4h1v-4zM321,314v3h1v-3zM322,314v2h1v-2zM323,314v3h1v-3zM324,312v5h1v-5zM325,312v2h1v-2zM326,312v2h1v-2zM327,312v3h1v-3zM328,312v3h1v-3zM329,312v3h1v-3zM330,313v2h1v-2zM331,313v2h1v-2zM332,311v4h1v-4zM333,305v8h1v-8zM334,303v4h1v-4zM335,304v8h1v-8zM336,309v3h1v-3zM337,305v6h1v-6zM338,305v3h1v-3zM339,306v2h1v-2zM340,303v5h1v-5zM341,304v5h1v-5zM342,305v4h1v-4zM343,305v3h1v-3zM344,307v4h1v-4zM345,307v4h1v-4zM346,308v3h1v-3zM347,308v3h1v-3zM348,307v3h1v-3zM349,307v2h1v-2zM350,308v6h1v-6zM351,307v7h1v-7zM352,308v5h1v-5zM353,305v8h1v-8zM354,306v5h1v-5zM355,308v3h1v-3zM356,305v5h1v-5zM357,299v8h1v-8zM358,300v12h1v-12zM359,301v11h1v-11zM360,302v4h1v-4zM361,305v4h1v-4zM362,307v2h1v-2zM363,307v2h1v-2zM364,306v3h1v-3zM365,297v11h1v-11zM366,298v15h1v-15zM367,304v9h1v-9zM368,305v4h1v-4zM369,307v3h1v-3zM370,309v3h1v-3zM371,306v6h1v-6zM372,305v3h1v-3zM373,305v3h1v-3zM374,301v7h1v-7zM375,302v3h1v-3zM376,303v2h1v-2zM377,303v2h1v-2zM378,304v4h1v-4zM379,305v3h1v-3zM380,306v11h1v-11zM381,310v7h1v-7zM382,301v11h1v-11zM383,302v5h1v-5zM384,303v4h1v-4zM385,304v5h1v-5zM386,306v3h1v-3zM387,307v3h1v-3zM388,307v3h1v-3zM389,307v3h1v-3zM390,305v5h1v-5zM391,298v9h1v-9zM392,299v4h1v-4zM393,301v3h1v-3zM394,302v3h1v-3zM395,302v3h1v-3zM396,303v8h1v-8zM397,305v6h1v-6zM398,306v4h1v-4zM399,304v6h1v-6zM400,305v6h1v-6zM401,302v9h1v-9zM402,303v5h1v-5zM403,301v7h1v-7zM404,302v5h1v-5zM405,306v5h1v-5zM406,300v11h1v-11zM407,300v3h1v-3zM408,302v4h1v-4zM409,303v3h1v-3zM410,300v5h1v-5zM411,301v7h1v-7zM412,304v4h1v-4zM413,305v4h1v-4zM414,305v4h1v-4zM415,300v7h1v-7zM416,301v3h1v-3zM417,303v6h1v-6zM418,300v9h1v-9zM419,300v3h1v-3zM420,302v5h1v-5zM421,305v3h1v-3zM422,306v2h1v-2zM423,299v9h1v-9zM424,300v10h1v-10zM425,303v7h1v-7zM426,303v2h1v-2zM427,302v3h1v-3zM428,302v2h1v-2zM429,300v4h1v-4zM430,300v3h1v-3zM431,302v6h1v-6zM432,299v9h1v-9zM433,295v6h1v-6zM434,296v9h1v-9zM435,303v3h1v-3zM436,304v3h1v-3zM437,306v3h1v-3zM438,301v8h1v-8zM439,302v3h1v-3zM440,303v3h1v-3zM441,305v3h1v-3zM442,306v2h1v-2zM443,300v8h1v-8zM444,298v4h1v-4zM445,299v4h1v-4zM446,298v5h1v-5zM447,299v8h1v-8zM448,302v5h1v-5zM449,301v3h1v-3zM450,300v3h1v-3zM451,301v7h1v-7zM452,304v4h1v-4zM453,301v5h1v-5zM454,302v4h1v-4zM455,302v4h1v-4zM456,303v3h1v-3zM457,305v3h1v-3zM458,302v6h1v-6zM459,302v3h1v-3zM460,303v3h1v-3zM461,304v3h1v-3zM462,304v3h1v-3zM463,302v4h1v-4zM464,300v4h1v-4zM465,301v4h1v-4zM466,299v6h1v-6zM467,300v5h1v-5zM468,302v3h1v-3zM469,303v3h1v-3zM470,301v5h1v-5zM471,299v4h1v-4zM472,298v3h1v-3zM473,299v7h1v-7zM474,300v6h1v-6zM475,299v3h1v-3zM476,295v6h1v-6zM477,296v4h1v-4zM478,289v11h1v-11zM479,290v13h1v-13zM480,298v5h1v-5zM481,298v2h1v-2zM482,294v6h1v-6zM483,290v6h1v-6zM484,291v10h1v-10zM485,297v4h1v-4zM486,298v3h1v-3zM487,300v3h1v-3zM488,299v4h1v-4zM489,292v9h1v-9zM490,293v3h1v-3zM491,293v3h1v-3zM492,293v3h1v-3zM493,291v5h1v-5zM494,290v3h1v-3zM495,290v2h1v-2zM496,291v5h1v-5zM497,295v5h1v-5zM498,295v5h1v-5zM499,296v6h1v-6zM500,291v11h1v-11zM501,291v2h1v-2zM502,292v6h1v-6zM503,295v3h1v-3zM504,293v4h1v-4zM505,294v5h1v-5zM506,298v3h1v-3zM507,299v3h1v-3zM508,295v7h1v-7zM509,295v3h1v-3zM510,296v2h1v-2zM511,296v2h1v-2zM512,297v4h1v-4zM513,295v6h1v-6zM514,296v3h1v-3zM515,290v9h1v-9zM516,291v8h1v-8z" fill="#ff00ff" shape-rendering="crispEdges"/>
<g shape-rendering="crispEdges">
<rect x="331" y="311" width="1" height="44" fill="#ff00ff"/>
<rect x="473" y="300" width="1" height="55" fill="#ff00ff"/>
<rect x="478" y="298" width="1" height="57" fill="#ff00ff"/>
</g>
<g shape-rendering="crispEdges">
<rect x="59" y="223" width="2" height="1" fill="#0000ff"/>
<rect x="60" y="237" width="1" height="1" fill="#000084"/>
<rect x="59" y="250" width="2" height="1" fill="#0000ff"/>
<rect x="60" y="263" width="1" height="1" fill="#000084"/>
<rect x="59" y="276" width="2" height="1" fill="#0000ff"/>
<rect x="60" y="289" width="1" height="1" fill="#000084"/>
<rect x="59" y="302" width="2" height="1" fill="#0000ff"/>
<rect x="60" y="315" width="1" height="1" fill="#000084"/>
<rect x="59" y="328" width="2" height="1" fill="#0000ff"/>
<rect x="60" y="341" width="1" height="1" fill="#000084"/>
<rect x="59" y="354" width="2" height="1" fill="#0000ff"/>
<rect x="61" y="355" width="1" height="1" fill="#000084"/>
<rect x="72" y="355" width="1" height="1" fill="#000084"/>
<rect x="82" y="355" width="1" height="1" fill="#000084"/>
<rect x="93" y="355" width="1" height="1" fill="#000084"/>
<rect x="103" y="355" width="1" height="1" fill="#000084"/>
<rect x="113" y="355" width="1" height="1" fill="#000084"/>
<rect x="124" y="355" width="1" height="1" fill="#000084"/>
<rect x="134" y="355" width="1" height="1" fill="#000084"/>
<rect x="145" y="355" width="1" height="1" fill="#000084"/>
<rect x="155" y="355" width="1" height="1" fill="#000084"/>
<rect x="165" y="355" width="1" height="1" fill="#000084"/>
<rect x="176" y="355" width="1" height="1" fill="#000084"/>
<rect x="186" y="355" width="1" height="1" fill="#000084"/>
<rect x="196" y="355" width="1" height="1" fill="#000084"/>
<rect x="207" y="355" width="1" height="1" fill="#000084"/>
<rect x="217" y="355" width="1" height="1" fill="#000084"/>
<rect x="228" y="355" width="1" height="1" fill="#000084"/>
<rect x="238" y="355" width="1" height="1" fill="#000084"/>
<rect x="248" y="355" width="1" height="1" fill="#000084"/>
<rect x="259" y="355" width="1" height="1" fill="#000084"/>
<rect x="269" y="355" width="1" height="1" fill="#000084"/>
<rect x="279" y="355" width="1" height="1" fill="#000084"/>
<rect x="290" y="355" width="1" height="1" fill="#000084"/>
<rect x="300" y="355" width="1" height="1" fill="#000084"/>
<rect x="311" y="355" width="1" height="1" fill="#000084"/>
<rect x="321" y="355" width="1" height="1" fill="#000084"/>
<rect x="331" y="355" width="1" height="1" fill="#000084"/>
<rect x="342" y="355" width="1" height="1" fill="#000084"/>
<rect x="352" y="355" width="1" height="1" fill="#000084"/>
<rect x="363" y="355" width="1" height="1" fill="#000084"/>
<rect x="373" y="355" width="1" height="1" fill="#000084"/>
<rect x="383" y="355" width="1" height="1" fill="#000084"/>
<rect x="394" y="355" width="1" height="1" fill="#000084"/>
<rect x="404" y="355" width="1" height="1" fill="#000084"/>
<rect x="414" y="355" width="1" height="1" fill="#000084"/>
<rect x="425" y="355" width="1" height="1" fill="#000084"/>
<rect x="435" y="355" width="1" height="1" fill="#000084"/>
<rect x="446" y="355" width="1" height="1" fill="#000084"/>
<rect x="456" y="355" width="1" height="1" fill="#000084"/>
<rect x="466" y="355" width="1" height="1" fill="#000084"/>
<rect x="477" y="355" width="1" height="1" fill="#000084"/>
<rect x="487" y="355" width="1" height="1" fill="#000084"/>
<rect x="497" y="355" width="1" height="1" fill="#000084"/>
<rect x="508" y="355" width="1" height="1" fill="#000084"/>
<rect x="518" y="355" width="1" height="1" fill="#000084"/>
<rect x="529" y="355" width="1" height="1" fill="#000084"/>
</g>
<text x="54.5" y="77.3" text-anchor="end" textLength="23.6" lengthAdjust="spacingAndGlyphs">2000</text>
<text x="54.5" y="104.3" text-anchor="end" textLength="23.6" lengthAdjust="spacingAndGlyphs">1600</text>
<text x="54.5" y="130.3" text-anchor="end" textLength="23.6" lengthAdjust="spacingAndGlyphs">1200</text>
<text x="54.5" y="156.3" text-anchor="end" textLength="17.700000000000003" lengthAdjust="spacingAndGlyphs">800</text>
<text x="54.5" y="182.3" text-anchor="end" textLength="17.700000000000003" lengthAdjust="spacingAndGlyphs">400</text>
<text x="54.5" y="227.6" text-anchor="end" textLength="23.6" lengthAdjust="spacingAndGlyphs">1000</text>
<text x="54.5" y="254.6" text-anchor="end" textLength="17.700000000000003" lengthAdjust="spacingAndGlyphs">800</text>
<text x="54.5" y="280.6" text-anchor="end" textLength="17.700000000000003" lengthAdjust="spacingAndGlyphs">600</text>
<text x="54.5" y="306.6" text-anchor="end" textLength="17.700000000000003" lengthAdjust="spacingAndGlyphs">400</text>
<text x="54.5" y="332.6" text-anchor="end" textLength="17.700000000000003" lengthAdjust="spacingAndGlyphs">200</text>
<text x="533" y="77.4" textLength="11.2" lengthAdjust="spacingAndGlyphs">16</text>
<text x="533" y="93.775" textLength="11.2" lengthAdjust="spacingAndGlyphs">14</text>
<text x="533" y="110.15" textLength="11.2" lengthAdjust="spacingAndGlyphs">12</text>
<text x="533" y="126.525" textLength="11.2" lengthAdjust="spacingAndGlyphs">10</text>
<text x="533" y="142.9" textLength="5.6" lengthAdjust="spacingAndGlyphs">8</text>
<text x="533" y="159.275" textLength="5.6" lengthAdjust="spacingAndGlyphs">6</text>
<text x="533" y="175.65" textLength="5.6" lengthAdjust="spacingAndGlyphs">4</text>
<text x="533" y="192.025" textLength="5.6" lengthAdjust="spacingAndGlyphs">2</text>
<text x="533" y="227.0" textLength="11.4" lengthAdjust="spacingAndGlyphs">40</text>
<text x="533" y="253.2" textLength="11.4" lengthAdjust="spacingAndGlyphs">32</text>
<text x="533" y="279.40000000000003" textLength="11.4" lengthAdjust="spacingAndGlyphs">24</text>
<text x="533" y="305.6" textLength="11.4" lengthAdjust="spacingAndGlyphs">16</text>
<text x="533" y="331.8" textLength="5.7" lengthAdjust="spacingAndGlyphs">8</text>
<text x="63.8" y="216.6" text-anchor="middle" textLength="13.6" lengthAdjust="spacingAndGlyphs">0.0</text>
<text x="63.8" y="366.6" text-anchor="middle" textLength="13.6" lengthAdjust="spacingAndGlyphs">0.0</text>
<text x="115.7" y="216.6" text-anchor="middle" textLength="13.6" lengthAdjust="spacingAndGlyphs">0.5</text>
<text x="115.7" y="366.6" text-anchor="middle" textLength="13.6" lengthAdjust="spacingAndGlyphs">0.5</text>
<text x="167.5" y="216.6" text-anchor="middle" textLength="13.6" lengthAdjust="spacingAndGlyphs">1.0</text>
<text x="167.5" y="366.6" text-anchor="middle" textLength="13.6" lengthAdjust="spacingAndGlyphs">1.0</text>
<text x="219.4" y="216.6" text-anchor="middle" textLength="13.6" lengthAdjust="spacingAndGlyphs">1.5</text>
<text x="219.4" y="366.6" text-anchor="middle" textLength="13.6" lengthAdjust="spacingAndGlyphs">1.5</text>
<text x="271.2" y="216.6" text-anchor="middle" textLength="13.6" lengthAdjust="spacingAndGlyphs">2.0</text>
<text x="271.2" y="366.6" text-anchor="middle" textLength="13.6" lengthAdjust="spacingAndGlyphs">2.0</text>
<text x="323.1" y="216.6" text-anchor="middle" textLength="13.6" lengthAdjust="spacingAndGlyphs">2.5</text>
<text x="323.1" y="366.6" text-anchor="middle" textLength="13.6" lengthAdjust="spacingAndGlyphs">2.5</text>
<text x="374.9" y="216.6" text-anchor="middle" textLength="13.6" lengthAdjust="spacingAndGlyphs">3.0</text>
<text x="374.9" y="366.6" text-anchor="middle" textLength="13.6" lengthAdjust="spacingAndGlyphs">3.0</text>
<text x="426.8" y="216.6" text-anchor="middle" textLength="13.6" lengthAdjust="spacingAndGlyphs">3.5</text>
<text x="426.8" y="366.6" text-anchor="middle" textLength="13.6" lengthAdjust="spacingAndGlyphs">3.5</text>
<text x="478.6" y="216.6" text-anchor="middle" textLength="13.6" lengthAdjust="spacingAndGlyphs">4.0</text>
<text x="478.6" y="366.6" text-anchor="middle" textLength="13.6" lengthAdjust="spacingAndGlyphs">4.0</text>
<text x="530.5" y="216.6" text-anchor="middle" textLength="13.6" lengthAdjust="spacingAndGlyphs">4.5</text>
<text x="530.5" y="366.6" text-anchor="middle" textLength="13.6" lengthAdjust="spacingAndGlyphs">4.5</text>
<text x="447.5" y="67.8" textLength="69" lengthAdjust="spacingAndGlyphs">recorded with</text>
<text x="525" y="67.8" textLength="5.6" lengthAdjust="spacingAndGlyphs">v</text>
<rect x="562.5" y="59.5" width="67" height="18" rx="3" fill="#fff" stroke="#000084"/>
<rect x="564" y="70" width="64" height="6" fill="#c0c0c0" shape-rendering="crispEdges"/>
<text x="583.7" y="72.2" textLength="23.6" lengthAdjust="spacingAndGlyphs">開始</text>
<rect x="654.5" y="59.5" width="67" height="18" rx="3" fill="#fff" stroke="#000084"/>
<rect x="656" y="70" width="64" height="5" fill="#c0c0c0" shape-rendering="crispEdges"/>
<path d="M656.5,61.5 H719.5" stroke="#a00000" stroke-dasharray="1,1" fill="none" shape-rendering="crispEdges"/>
<path d="M656.5,75.5 H719.5" stroke="#a09000" stroke-dasharray="1,1" fill="none" shape-rendering="crispEdges"/>
<path d="M656.5,61.5 V75.5 M719.5,61.5 V75.5" stroke="#000" stroke-dasharray="1,1" fill="none" shape-rendering="crispEdges"/>
<text x="668" y="72.2" textLength="37.6" lengthAdjust="spacingAndGlyphs">終了(X)</text>
<rect x="696.5" y="73" width="6" height="1" fill="#000" shape-rendering="crispEdges"/>
<path d="M568,92.5 H565.5 Q561.5,92.5 561.5,96.5 V162.5 Q561.5,166.5 565.5,166.5 H719.5 Q723.5,166.5 723.5,162.5 V96.5 Q723.5,92.5 719.5,92.5 H629.5" fill="none" stroke="#c4c4bc" stroke-width="1"/>
<text x="569.5" y="96.6" fill="#0000f0" textLength="58" lengthAdjust="spacingAndGlyphs">ディスク情報</text>
<text x="569" y="111.0" textLength="27" lengthAdjust="spacingAndGlyphs">タイプ:</text>
<text x="617.5" y="111.0" fill="#000080" textLength="38.6" lengthAdjust="spacingAndGlyphs">DVD-R</text>
<text x="569" y="126.0" textLength="13.5" lengthAdjust="spacingAndGlyphs">ID:</text>
<text x="617.5" y="126.0" fill="#000080" textLength="51" lengthAdjust="spacingAndGlyphs">RITEKG04</text>
<text x="569" y="141.1" textLength="26" lengthAdjust="spacingAndGlyphs">日付:</text>
<text x="617.5" y="141.1" fill="#000080" textLength="83" lengthAdjust="spacingAndGlyphs">17 October 2004</text>
<text x="569" y="156.2" textLength="29.5" lengthAdjust="spacingAndGlyphs">Label:</text>
<text x="617.5" y="156.2" fill="#000080" textLength="72.5" lengthAdjust="spacingAndGlyphs">CDS_TEST_B2</text>
<path d="M568,174.5 H565.5 Q561.5,174.5 561.5,178.5 V335.5 Q561.5,339.5 565.5,339.5 H719.5 Q723.5,339.5 723.5,335.5 V178.5 Q723.5,174.5 719.5,174.5 H613" fill="none" stroke="#c4c4bc" stroke-width="1"/>
<text x="569" y="177" fill="#0000f0" textLength="42" lengthAdjust="spacingAndGlyphs">Settings</text>
<text x="568.7" y="199" textLength="47" lengthAdjust="spacingAndGlyphs">転送速度</text>
<text x="568.7" y="224" textLength="23" lengthAdjust="spacingAndGlyphs">開始</text>
<text x="568.7" y="246" textLength="47" lengthAdjust="spacingAndGlyphs">終了位置</text>
<g shape-rendering="crispEdges">
<rect x="631" y="185" width="82" height="20" fill="#fff"/>
<rect x="631" y="185" width="82" height="1" fill="#707070"/>
<rect x="631" y="185" width="1" height="20" fill="#707070"/>
<rect x="631" y="204" width="82" height="1" fill="#9a9a9a"/>
<rect x="712" y="185" width="1" height="20" fill="#8a8a8a"/>
<rect x="632" y="186" width="80" height="1" fill="#b8b8b8"/>
<rect x="632" y="186" width="1" height="18" fill="#c8c8c8"/>
<rect x="696" y="186" width="16" height="18" fill="#fff"/>
<rect x="695" y="186" width="1" height="18" fill="#a0a0a0"/>
<rect x="697" y="194" width="13" height="9" fill="#c0c0c0"/>
<rect x="711" y="186" width="1" height="18" fill="#808080"/>
<rect x="696" y="203" width="16" height="1" fill="#909090"/>
</g>
<path d="M700,192.5 L703.5,196 L707,192.5" fill="none" stroke="#008080" stroke-width="2.2"/>
<text x="634.7" y="199" textLength="23.3" lengthAdjust="spacingAndGlyphs">最大</text>
<rect x="631.5" y="209.5" width="69" height="17" fill="#fff" stroke="#c4c4c4" shape-rendering="crispEdges"/>
<text x="634" y="221.6" textLength="44.3" lengthAdjust="spacingAndGlyphs">0000 MB</text>
<rect x="631.5" y="232.5" width="69" height="17" fill="#fff" stroke="#c4c4c4" shape-rendering="crispEdges"/>
<text x="634" y="244.6" textLength="44.3" lengthAdjust="spacingAndGlyphs">4488 MB</text>
<rect x="569.5" y="255.5" width="12" height="12" fill="#fff" stroke="#008080" shape-rendering="crispEdges"/>
<path d="M572,260.5 L574.6,263.6 L578.8,258.4" fill="none" stroke="#00e000" stroke-width="2.4"/>
<text x="584.9" y="265.6" textLength="67.3" lengthAdjust="spacingAndGlyphs">Show C1/PIE</text>
<rect x="569.5" y="272.5" width="12" height="12" fill="#fff" stroke="#008080" shape-rendering="crispEdges"/>
<path d="M572,277.5 L574.6,280.6 L578.8,275.4" fill="none" stroke="#00e000" stroke-width="2.4"/>
<text x="584.9" y="282.0" textLength="66.8" lengthAdjust="spacingAndGlyphs">Show C2/PIF</text>
<rect x="569.5" y="288.5" width="12" height="12" fill="#fff" stroke="#008080" shape-rendering="crispEdges"/>
<path d="M572,293.5 L574.6,296.6 L578.8,291.4" fill="none" stroke="#00e000" stroke-width="2.4"/>
<text x="584.9" y="298.5" textLength="58.3" lengthAdjust="spacingAndGlyphs">Show Jitter</text>
<rect x="569.5" y="305.5" width="12" height="12" fill="#fff" stroke="#008080" shape-rendering="crispEdges"/>
<path d="M572,310.5 L574.6,313.6 L578.8,308.4" fill="none" stroke="#00e000" stroke-width="2.4"/>
<text x="584.9" y="314.9" textLength="91" lengthAdjust="spacingAndGlyphs">Show Read Speed</text>
<rect x="569.5" y="321.5" width="12" height="12" fill="#fff" stroke="#008080" shape-rendering="crispEdges"/>
<path d="M572,326.5 L574.6,329.6 L578.8,324.4" fill="none" stroke="#00e000" stroke-width="2.4"/>
<text x="584.9" y="331.4" textLength="91" lengthAdjust="spacingAndGlyphs">Show Write Speed</text>
<path d="M565.5,344.5 Q561.5,344.5 561.5,348.5 V363.5 Q561.5,367.5 565.5,367.5 H719.5 Q723.5,367.5 723.5,363.5 V348.5 Q723.5,344.5 719.5,344.5 Z" fill="none" stroke="#c4c4bc" stroke-width="1"/>
<text x="569" y="360" textLength="51" lengthAdjust="spacingAndGlyphs">品質スコア:</text>
<text x="706.4" y="360" fill="#000080" text-anchor="end" textLength="5.6" lengthAdjust="spacingAndGlyphs">0</text>
<path d="M565.5,374.5 Q561.5,374.5 561.5,378.5 V432.5 Q561.5,436.5 565.5,436.5 H719.5 Q723.5,436.5 723.5,432.5 V378.5 Q723.5,374.5 719.5,374.5 Z" fill="none" stroke="#c4c4bc" stroke-width="1"/>
<text x="569" y="391.5" textLength="50" lengthAdjust="spacingAndGlyphs">進行状況:</text>
<text x="707.7" y="391.5" fill="#000080" text-anchor="end" textLength="29" lengthAdjust="spacingAndGlyphs">100 %</text>
<text x="569" y="411" textLength="46" lengthAdjust="spacingAndGlyphs">ポジション:</text>
<text x="706.6" y="411" fill="#000080" text-anchor="end" textLength="44.5" lengthAdjust="spacingAndGlyphs">4487 MB</text>
<text x="569" y="429" textLength="25.5" lengthAdjust="spacingAndGlyphs">速度:</text>
<text x="707.7" y="429" fill="#000080" text-anchor="end" textLength="31" lengthAdjust="spacingAndGlyphs">8.37 X</text>
<path d="M28,374.5 H18.5 V435.5 H187.5 V374.5 H90" fill="none" stroke="#868686" shape-rendering="crispEdges"/>
<rect x="28.5" y="371.5" width="7" height="7" fill="#00ffff" stroke="#000" shape-rendering="crispEdges"/>
<text x="40.7" y="378.6" textLength="43.5" lengthAdjust="spacingAndGlyphs">PI Errors</text>
<path d="M208,374.5 H198.5 V435.5 H367.5 V374.5 H280" fill="none" stroke="#868686" shape-rendering="crispEdges"/>
<rect x="208.5" y="371.5" width="7" height="7" fill="#ffff00" stroke="#000" shape-rendering="crispEdges"/>
<text x="220.7" y="378.6" textLength="53.2" lengthAdjust="spacingAndGlyphs">PI Failures</text>
<path d="M389,374.5 H379.5 V419.5 H548.5 V374.5 H428" fill="none" stroke="#868686" shape-rendering="crispEdges"/>
<rect x="389.5" y="371.5" width="7" height="7" fill="#ff00ff" stroke="#000" shape-rendering="crispEdges"/>
<text x="402" y="378.6" textLength="25.6" lengthAdjust="spacingAndGlyphs">Jitter</text>
<text x="26.6" y="392.8" textLength="26.4" lengthAdjust="spacingAndGlyphs">平均:</text>
<text x="209.2" y="392.8" textLength="25.5" lengthAdjust="spacingAndGlyphs">平均:</text>
<text x="388.5" y="392.8" textLength="26.4" lengthAdjust="spacingAndGlyphs">平均:</text>
<text x="26.6" y="410.8" textLength="26.4" lengthAdjust="spacingAndGlyphs">最大:</text>
<text x="209.2" y="410.8" textLength="25.5" lengthAdjust="spacingAndGlyphs">最大:</text>
<text x="388.5" y="410.8" textLength="26.4" lengthAdjust="spacingAndGlyphs">最大:</text>
<text x="26.6" y="429" textLength="29.4" lengthAdjust="spacingAndGlyphs">合計 :</text>
<text x="209.2" y="429" textLength="29.4" lengthAdjust="spacingAndGlyphs">合計 :</text>
<text x="175.4" y="392.8" fill="#000080" text-anchor="end" textLength="31.7" lengthAdjust="spacingAndGlyphs">159.68</text>
<text x="173.8" y="410.8" fill="#000080" text-anchor="end" textLength="23" lengthAdjust="spacingAndGlyphs">1536</text>
<text x="175.4" y="429" fill="#000080" text-anchor="end" textLength="41.4" lengthAdjust="spacingAndGlyphs">2319584</text>
<text x="357.5" y="392.8" fill="#000080" text-anchor="end" textLength="26.1" lengthAdjust="spacingAndGlyphs">40.36</text>
<text x="356.2" y="410.8" fill="#000080" text-anchor="end" textLength="17.2" lengthAdjust="spacingAndGlyphs">794</text>
<text x="357.5" y="429" fill="#000080" text-anchor="end" textLength="35.8" lengthAdjust="spacingAndGlyphs">421369</text>
<text x="538.4" y="392.8" fill="#000080" text-anchor="end" textLength="36.6" lengthAdjust="spacingAndGlyphs">11.66 %</text>
<text x="538.4" y="410.8" fill="#000080" text-anchor="end" textLength="31.2" lengthAdjust="spacingAndGlyphs">20.3 %</text>
<text x="389.3" y="434" textLength="60.8" lengthAdjust="spacingAndGlyphs">PO Failures:</text>
<text x="535" y="434" fill="#000080" text-anchor="end" textLength="33.2" lengthAdjust="spacingAndGlyphs">421821</text>
</svg></body></html>
